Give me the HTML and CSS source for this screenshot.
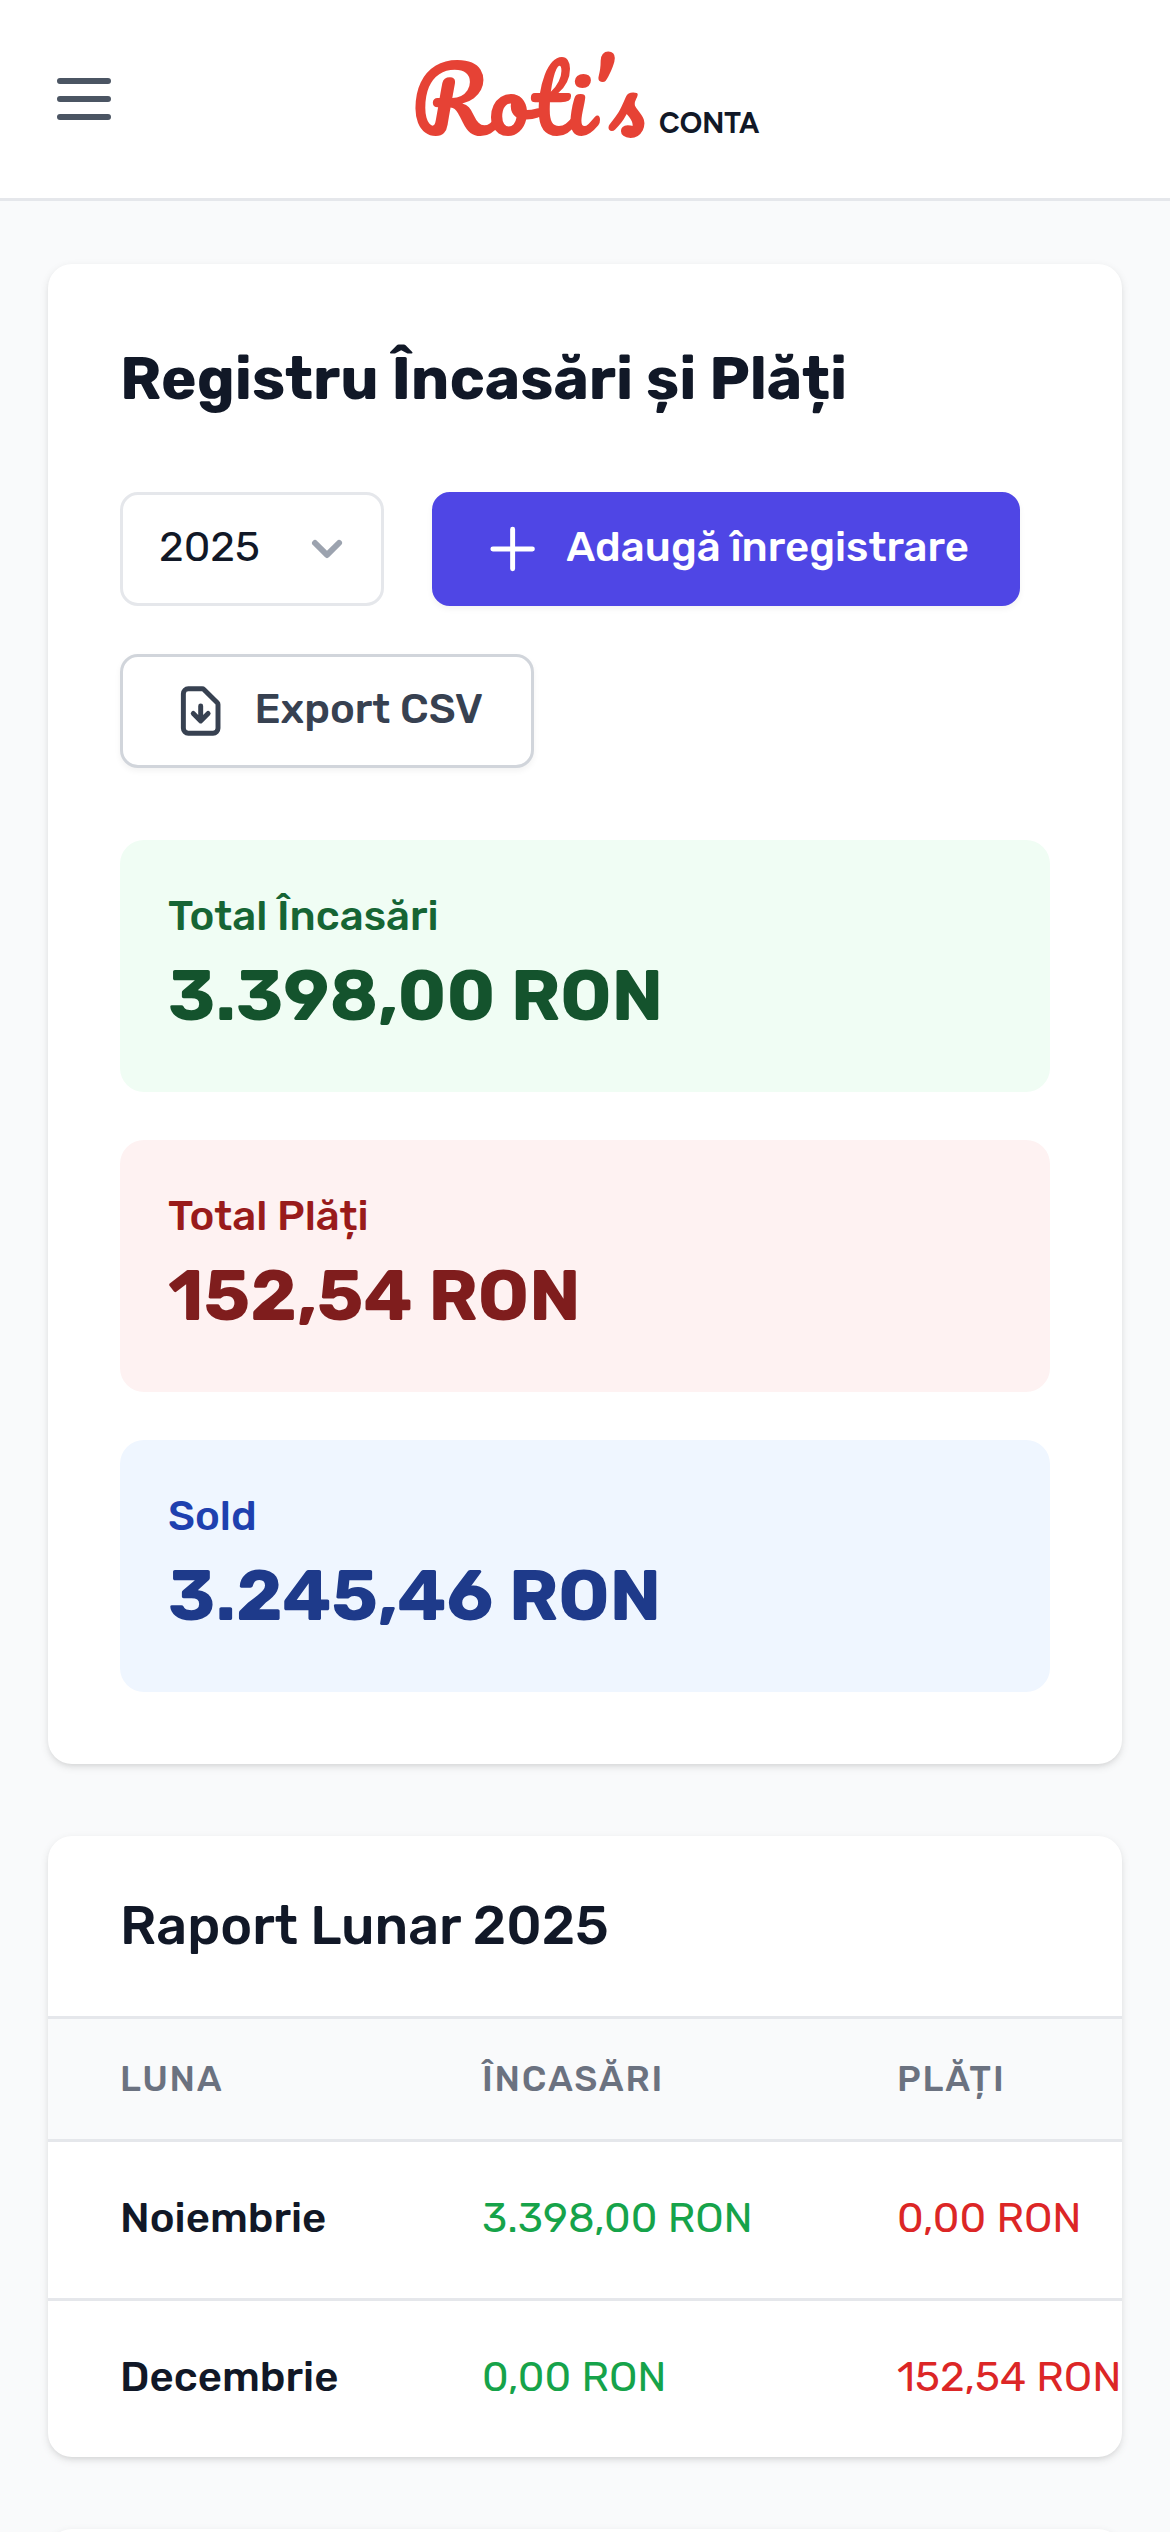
FILE: index.html
```
<!DOCTYPE html>
<html lang="ro">
<head>
  <meta charset="utf-8">
  <meta name="viewport" content="width=device-width, initial-scale=1.0">
  <title>Roti's Conta - Registru Încasări și Plăți</title>
  <link rel="stylesheet" href="styles.css">
</head>
<body>
  <!-- Header -->
  <header class="header">
    <button class="menu-btn" aria-label="Meniu">
      <svg viewBox="0 0 24 24" fill="none" stroke="currentColor" stroke-width="2" stroke-linecap="round">
        <path d="M4 6h16M4 12h16M4 18h16"/>
      </svg>
    </button>
    <div class="logo">
      <div class="logo-name"><span class="logo-script">Roti’</span>s</div>
      <span class="logo-tag">CONTA</span>
    </div>
  </header>

  <main class="content">
    <!-- Totals -->
    <section class="card register">
      <h1 class="title">Registru Încasări și Plăți</h1>

      <div class="controls">
        <button class="select">
          <span class="btn-text">2025</span>
          <svg class="chevron" viewBox="0 0 20 20" fill="currentColor">
            <path d="M5.293 7.293a1 1 0 011.414 0L10 10.586l3.293-3.293a1 1 0 111.414 1.414l-4 4a1 1 0 01-1.414 0l-4-4a1 1 0 010-1.414z"/>
          </svg>
        </button>
        <button class="btn btn-primary">
          <svg viewBox="0 0 24 24" fill="none" stroke="currentColor" stroke-width="2" stroke-linecap="round" stroke-linejoin="round">
            <path d="M12 4v16m8-8H4"/>
          </svg>
          <span class="btn-text">Adaugă înregistrare</span>
        </button>
        <button class="btn btn-outline">
          <svg viewBox="0 0 24 24" fill="none" stroke="currentColor" stroke-width="2" stroke-linecap="round" stroke-linejoin="round">
            <path d="M12 10v6m0 0l-3-3m3 3l3-3m2 8H7a2 2 0 01-2-2V5a2 2 0 012-2h5.586a1 1 0 01.707.293l5.414 5.414a1 1 0 01.293.707V19a2 2 0 01-2 2z"/>
          </svg>
          <span class="btn-text">Export CSV</span>
        </button>
      </div>

      <div class="totals">
        <div class="total total-in">
          <div class="total-label">Total Încasări</div>
          <div class="total-value">3.398,00 RON</div>
        </div>
        <div class="total total-out">
          <div class="total-label">Total Plăți</div>
          <div class="total-value">152,54 RON</div>
        </div>
        <div class="total total-balance">
          <div class="total-label">Sold</div>
          <div class="total-value">3.245,46 RON</div>
        </div>
      </div>
    </section>

    <!-- Monthly report -->
    <section class="card report">
      <h2 class="report-title">Raport Lunar 2025</h2>
      <table class="report-table">
        <thead>
          <tr>
            <th class="col-month">Luna</th>
            <th class="col-in">Încasări</th>
            <th>Plăți</th>
          </tr>
        </thead>
        <tbody>
          <tr>
            <td class="month">Noiembrie</td>
            <td class="in">3.398,00 RON</td>
            <td class="out">0,00 RON</td>
          </tr>
          <tr>
            <td class="month">Decembrie</td>
            <td class="in">0,00 RON</td>
            <td class="out">152,54 RON</td>
          </tr>
        </tbody>
      </table>
    </section>

    <section class="card next-card"></section>
  </main>
</body>
</html>
```
FILE: styles.css
```
* {
  margin: 0;
  padding: 0;
  box-sizing: border-box;
}

body {
  height: 2532px;
  overflow: hidden;
  font-family: Rubik, Inter, sans-serif;
  font-size: 42px;
  line-height: 60px;
  color: #111827;
  background: #f9fafb;
}

button {
  font: inherit;
  color: inherit;
  background: none;
  border: none;
  cursor: pointer;
}

.header {
  display: grid;
  grid-template-columns: 1fr auto 1fr;
  align-items: center;
  height: 201px;
  padding: 0 48px;
  background: #fff;
  border-bottom: 3px solid #e5e7eb;
}

.menu-btn {
  width: 72px;
  height: 72px;
  color: #4b5563;
}

.menu-btn svg {
  display: block;
}

.logo {
  display: flex;
  align-items: flex-end;
  gap: 14px;
  margin-bottom: 2px;
}

.logo-name {
  height: 96px;
  font-family: Pacifico, cursive;
  font-size: 90px;
  line-height: 96px;
  color: #e64235;
}

/* keeps the connecting tail on the "i" */
.logo-script {
  font-feature-settings: "calt" 0;
}

.logo-tag {
  margin-bottom: 5px;
  font-family: Figtree, Lato, sans-serif;
  font-size: 28.5px;
  font-weight: 700;
  line-height: 36px;
}

.content {
  display: flex;
  flex-direction: column;
  gap: 72px;
  padding: 63px 48px 0;
}

.card {
  flex-shrink: 0;
  background: #fff;
  border-radius: 24px;
  box-shadow: 0 3px 9px rgba(0, 0, 0, 0.1), 0 3px 6px -3px rgba(0, 0, 0, 0.1);
}

.register {
  padding: 72px;
}

.title {
  padding-top: 1px;
  font-size: 60px;
  font-weight: 700;
  line-height: 84px;
  margin-bottom: 71px;
}

.controls {
  display: flex;
  flex-wrap: wrap;
  gap: 48px;
  margin-bottom: 72px;
}

.select,
.btn {
  display: flex;
  align-items: center;
  height: 114px;
  border-radius: 18px;
  white-space: nowrap;
}

.btn-text {
  padding-bottom: 4px;
}

.select {
  justify-content: space-between;
  width: 264px;
  padding: 0 24px 0 36px;
  border: 3px solid #e5e7eb;
}

.chevron {
  width: 60px;
  height: 60px;
  color: #9ca3af;
}

.btn {
  gap: 24px;
  padding: 0 48px;
  font-weight: 500;
  border: 3px solid transparent;
  box-shadow: 0 3px 6px rgba(0, 0, 0, 0.05);
}

.btn svg {
  width: 60px;
  height: 60px;
}

.btn-primary {
  width: 588px;
  color: #fff;
  background: #4f46e5;
  border-color: #4f46e5;
}

.btn-outline {
  width: 414px;
  color: #374151;
  background: #fff;
  border-color: #d1d5db;
}

.totals {
  display: flex;
  flex-direction: column;
  gap: 48px;
}

.total {
  height: 252px;
  padding: 48px;
  border-radius: 24px;
}

.total-label {
  margin-bottom: 4px;
  font-weight: 500;
  line-height: 56px;
}

.total-value {
  font-size: 72px;
  font-weight: 700;
  line-height: 96px;
}

.total-in {
  color: #14532d;
  background: #f0fdf4;
}

.total-in .total-label {
  color: #166534;
}

.total-out {
  color: #7f1d1d;
  background: #fef2f2;
}

.total-out .total-label {
  color: #991b1b;
}

.total-balance {
  color: #1e3a8a;
  background: #eff6ff;
}

.total-balance .total-label {
  color: #1e40af;
}

.report {
  overflow: hidden;
}

.report-title {
  padding: 48px 72px;
  font-size: 54px;
  font-weight: 500;
  line-height: 84px;
}

.report-table {
  width: 100%;
  table-layout: fixed;
  border-collapse: separate;
  border-spacing: 0;
}

.report-table th,
.report-table td {
  padding-left: 72px;
  text-align: left;
  white-space: nowrap;
  border-top: 3px solid #e5e7eb;
}

.report-table th {
  height: 123px;
  font-size: 36px;
  font-weight: 500;
  line-height: 48px;
  letter-spacing: 1.8px;
  text-transform: uppercase;
  color: #6b7280;
  background: #f9fafb;
}

.report-table td {
  height: 159px;
  padding-bottom: 4px;
}

.col-month {
  width: 362px;
}

.col-in {
  width: 415px;
}

.month {
  font-weight: 500;
}

.in {
  color: #16a34a;
}

.out {
  color: #dc2626;
}

.next-card {
  height: 300px;
}
```
